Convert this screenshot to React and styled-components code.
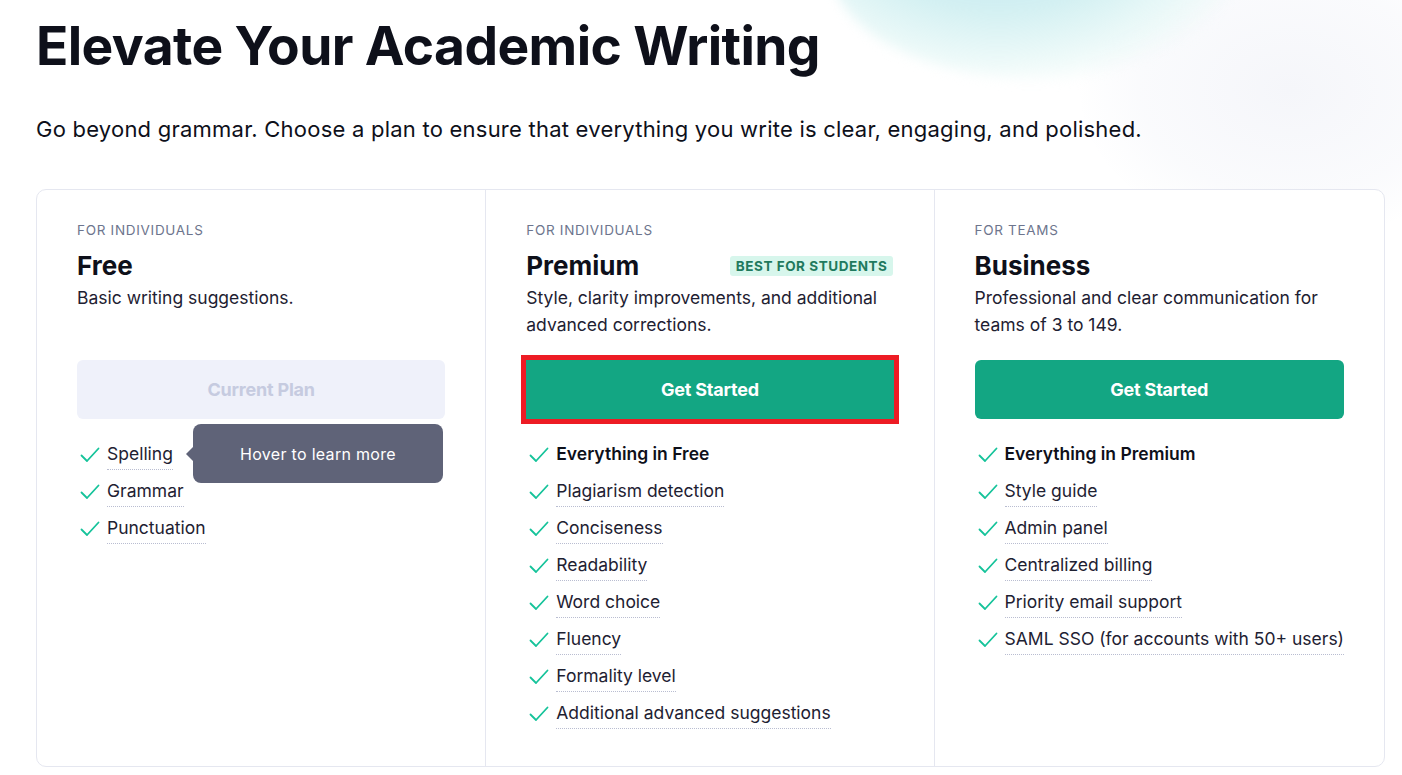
import React from "react";
import styled, { createGlobalStyle } from "styled-components";

const GlobalStyle = createGlobalStyle`
    * { box-sizing: border-box; }
    body {
        margin: 0;
        background: #ffffff;
        font-family: Inter, "Noto Sans", Arial, sans-serif;
        color: #0e101a;
        overflow: hidden;
    }
`;

const Page = styled.div`
    position: relative;
    width: 1402px;
    height: 775px;
    padding: 0 17px 0 36px;
    overflow: hidden;
`;

const Glow = styled.div`
    position: absolute;
    top: -150px;
    left: 830px;
    width: 420px;
    height: 230px;
    border-radius: 50%;
    background: radial-gradient(ellipse at 40% 30%, #bfe3f5 0%, #d3f0f2 40%, rgba(230, 248, 246, 0.6) 65%, rgba(255,255,255,0) 75%);
    filter: blur(6px);
    z-index: 0;
`;

const GlowGray = styled.div`
    position: absolute;
    top: -60px;
    left: 1080px;
    width: 420px;
    height: 300px;
    border-radius: 50%;
    background: radial-gradient(ellipse at center, #f5f6fa 0%, rgba(248,249,252,0.7) 50%, rgba(255,255,255,0) 72%);
    z-index: 0;
`;

const Content = styled.div`
    position: relative;
    z-index: 1;
`;

const Title = styled.h1`
    margin: 0;
    padding-top: 14px;
    font-size: 53.3px;
    line-height: 64px;
    font-weight: 700;
    letter-spacing: -0.6px;
    color: #0e101a;
`;

const Subtitle = styled.p`
    margin: 36px 0 0;
    font-size: 22px;
    line-height: 30px;
    font-weight: 400;
    letter-spacing: 0.23px;
    color: #0e101a;
`;

const Plans = styled.div`
    margin-top: 45px;
    display: grid;
    grid-template-columns: repeat(3, 1fr);
    border: 1px solid #e5e7f0;
    border-radius: 10px;
    height: 578px;
    background: rgba(255,255,255,0.85);
`;

const Column = styled.div`
    padding: 32px 40px 0 40px;
    border-left: ${props => props.first ? 'none' : '1px solid #e5e7f0'};
    display: flex;
    flex-direction: column;
`;

const Audience = styled.div`
    font-size: 13.5px;
    line-height: 16px;
    letter-spacing: 0.7px;
    color: #6d758d;
    text-transform: uppercase;
`;

const NameRow = styled.div`
    display: flex;
    align-items: center;
    justify-content: space-between;
    margin-top: 12px;
    height: 32px;
`;

const Name = styled.h2`
    margin: 0;
    font-size: 26px;
    line-height: 32px;
    font-weight: 700;
    color: #0e101a;
`;

const Badge = styled.span`
    background: #d7f6ec;
    color: #1f7a5e;
    font-size: 13.5px;
    font-weight: 700;
    letter-spacing: 0.55px;
    padding: 2px 5px 2px 6px;
    border-radius: 3px;
    line-height: 16px;
    margin-right: 1px;
`;

const Description = styled.p`
    margin: 2px 0 0;
    font-size: 17.5px;
    line-height: 27px;
    color: #1e2132;
    min-height: 54px;
`;

const Button = styled.button`
    margin-top: 22px;
    width: 100%;
    height: 59px;
    border: none;
    border-radius: ${props => props.highlight ? '0' : '6px'};
    outline: ${props => props.highlight ? '5px solid #ed1c24' : 'none'};
    background: ${props => props.disabled ? '#eff1fa' : '#13a683'};
    color: ${props => props.disabled ? '#c6cbe0' : '#ffffff'};
    font-family: Inter, "Noto Sans", Arial, sans-serif;
    font-size: 18px;
    font-weight: 700;
    letter-spacing: -0.2px;
    cursor: pointer;
`;

const Features = styled.ul`
    list-style: none;
    margin: 22px 0 0;
    padding: 0;
`;

const Feature = styled.li`
    position: relative;
    display: flex;
    align-items: flex-start;
    height: 37px;
`;

const Check = styled.svg`
    width: 20px;
    height: 16px;
    margin: 6px 7px 0 3px;
    flex-shrink: 0;
`;

const FeatureText = styled.span`
    font-size: 17.5px;
    line-height: 25px;
    white-space: nowrap;
    font-weight: ${props => props.strong ? 600 : 400};
    color: ${props => props.strong ? '#0e101a' : '#1e2132'};
    padding-bottom: 3px;
    border-bottom: ${props => props.strong ? 'none' : '1px dotted #b9bdd1'};
`;

const Tooltip = styled.div`
    position: absolute;
    left: 116px;
    top: -17px;
    width: 250px;
    height: 59px;
    background: #5f6378;
    color: #ffffff;
    border-radius: 8px;
    display: flex;
    align-items: center;
    justify-content: center;
    font-size: 16px;
    letter-spacing: 0.3px;
    &::before {
        content: "";
        position: absolute;
        left: -7px;
        top: 23px;
        border-top: 7px solid transparent;
        border-bottom: 7px solid transparent;
        border-right: 7px solid #5f6378;
    }
`;

const CheckIcon = () => (
    <Check viewBox="0 0 20 16" fill="none">
        <polyline points="1.5,8.5 7,14 18.5,1.5" stroke="#15c39a" strokeWidth="1.8" strokeLinecap="round" strokeLinejoin="round" />
    </Check>
);

const plans = [
    {
        audience: 'For individuals',
        name: 'Free',
        description: 'Basic writing suggestions.',
        button: 'Current Plan',
        current: true,
        features: [
            { text: 'Spelling', tooltip: 'Hover to learn more' },
            { text: 'Grammar' },
            { text: 'Punctuation' },
        ],
    },
    {
        audience: 'For individuals',
        name: 'Premium',
        badge: 'Best for students',
        description: 'Style, clarity improvements, and additional advanced corrections.',
        button: 'Get Started',
        highlight: true,
        features: [
            { text: 'Everything in Free', strong: true },
            { text: 'Plagiarism detection' },
            { text: 'Conciseness' },
            { text: 'Readability' },
            { text: 'Word choice' },
            { text: 'Fluency' },
            { text: 'Formality level' },
            { text: 'Additional advanced suggestions' },
        ],
    },
    {
        audience: 'For teams',
        name: 'Business',
        description: 'Professional and clear communication for teams of 3 to 149.',
        button: 'Get Started',
        features: [
            { text: 'Everything in Premium', strong: true },
            { text: 'Style guide' },
            { text: 'Admin panel' },
            { text: 'Centralized billing' },
            { text: 'Priority email support' },
            { text: 'SAML SSO (for accounts with 50+ users)' },
        ],
    },
];

export default function App() {
    return (
        <Page>
            <GlobalStyle />
            <GlowGray />
            <Glow />
            <Content>
                <Title>Elevate Your Academic Writing</Title>
                <Subtitle>Go beyond grammar. Choose a plan to ensure that everything you write is clear, engaging, and polished.</Subtitle>
                <Plans>
                    {plans.map((plan, index) => (
                        <Column key={plan.name} first={index === 0}>
                            <Audience>{plan.audience}</Audience>
                            <NameRow>
                                <Name>{plan.name}</Name>
                                {plan.badge ? <Badge>{plan.badge.toUpperCase()}</Badge> : null}
                            </NameRow>
                            <Description>{plan.description}</Description>
                            <Button highlight={plan.highlight} disabled={plan.current}>{plan.button}</Button>
                            <Features>
                                {plan.features.map(feature => (
                                    <Feature key={feature.text}>
                                        <CheckIcon />
                                        <FeatureText strong={feature.strong}>{feature.text}</FeatureText>
                                        {feature.tooltip ? <Tooltip>{feature.tooltip}</Tooltip> : null}
                                    </Feature>
                                ))}
                            </Features>
                        </Column>
                    ))}
                </Plans>
            </Content>
        </Page>
    );
}
